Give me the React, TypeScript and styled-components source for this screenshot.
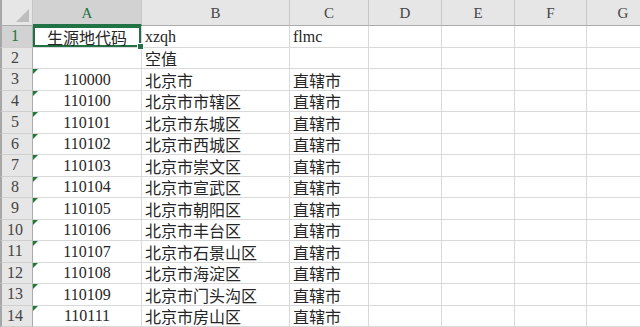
import React, { FC } from "react";
import styled, { createGlobalStyle } from "styled-components";

const GlobalStyle = createGlobalStyle`
  html, body {
    margin: 0;
    padding: 0;
    background: #ffffff;
    overflow: hidden;
  }
`;

const COLS = ["A", "B", "C", "D", "E", "F", "G"];

type Row = { code: string; name: string; kind: string; flag?: boolean };

const ROWS: Row[] = [
  { code: "生源地代码", name: "xzqh", kind: "flmc" },
  { code: "", name: "空值", kind: "" },
  { code: "110000", name: "北京市", kind: "直辖市", flag: true },
  { code: "110100", name: "北京市市辖区", kind: "直辖市", flag: true },
  { code: "110101", name: "北京市东城区", kind: "直辖市", flag: true },
  { code: "110102", name: "北京市西城区", kind: "直辖市", flag: true },
  { code: "110103", name: "北京市崇文区", kind: "直辖市", flag: true },
  { code: "110104", name: "北京市宣武区", kind: "直辖市", flag: true },
  { code: "110105", name: "北京市朝阳区", kind: "直辖市", flag: true },
  { code: "110106", name: "北京市丰台区", kind: "直辖市", flag: true },
  { code: "110107", name: "北京市石景山区", kind: "直辖市", flag: true },
  { code: "110108", name: "北京市海淀区", kind: "直辖市", flag: true },
  { code: "110109", name: "北京市门头沟区", kind: "直辖市", flag: true },
  { code: "110111", name: "北京市房山区", kind: "直辖市", flag: true },
];

const App: FC = () => {
  return (
    <>
      <GlobalStyle />
      <SViewport>
        <SSheet>
          <SCorner>
            <STriangle />
          </SCorner>
          {COLS.map((c, i) => (
            <SColHead key={c} $active={i === 0}>
              {c}
            </SColHead>
          ))}
          {ROWS.map((r, i) => (
            <React.Fragment key={i}>
              <SRowHead $active={i === 0}>{i + 1}</SRowHead>
              <SCell $align="center" $selected={i === 0}>
                {r.flag && <SFlag />}
                {r.code}
                {i === 0 && <SHandle />}
              </SCell>
              <SCell $align="left">{r.name}</SCell>
              <SCell $align="left">{r.kind}</SCell>
              <SCell />
              <SCell />
              <SCell />
              <SCell />
            </React.Fragment>
          ))}
        </SSheet>
      </SViewport>
    </>
  );
};

const SViewport = styled.div`
  width: 100vw;
  height: 100vh;
  overflow: hidden;
`;

const SSheet = styled.div`
  display: grid;
  grid-template-columns: 33px 109px 148px 79px 73px 73px 72px 73px;
  grid-template-rows: 26px repeat(14, 21.5px);
  font-family: "Liberation Serif", "Noto Sans CJK SC", serif;
  color: #262626;
`;

const SCorner = styled.div`
  position: relative;
  background: #e6e6e6;
  border-left: 2px solid #a6a6a6;
  border-bottom: 1px solid #ababab;
  border-right: 1px solid #c6c6c6;
  box-sizing: border-box;
`;

const STriangle = styled.div`
  position: absolute;
  right: 3px;
  bottom: 3px;
  width: 0;
  height: 0;
  border-left: 13px solid transparent;
  border-bottom: 13px solid #bdbdbd;
`;

const SColHead = styled.div<{ $active: boolean }>`
  display: flex;
  align-items: center;
  justify-content: center;
  padding-top: 2px;
  box-sizing: border-box;
  background: ${(p) => (p.$active ? "#d2d2d2" : "#e6e6e6")};
  color: ${(p) => (p.$active ? "#217346" : "#444")};
  border-right: 1px solid #c6c6c6;
  border-bottom: ${(p) => (p.$active ? "2px solid #217346" : "1px solid #ababab")};
  font-size: 15px;
`;

const SRowHead = styled.div<{ $active: boolean }>`
  display: flex;
  align-items: center;
  justify-content: center;
  box-sizing: border-box;
  background: ${(p) => (p.$active ? "#d2d2d2" : "#e6e6e6")};
  color: ${(p) => (p.$active ? "#217346" : "#444")};
  border-left: 2px solid #a6a6a6;
  border-right: 1px solid #ababab;
  border-bottom: 1px solid #cfcfcf;
  font-size: 16px;
  padding-right: 4px;
`;

const SCell = styled.div<{ $align?: "left" | "center"; $selected?: boolean }>`
  position: relative;
  display: flex;
  align-items: center;
  justify-content: ${(p) => (p.$align === "center" ? "center" : "flex-start")};
  padding: 1px 3px 0;
  box-sizing: border-box;
  border-right: 1px solid #d9d9d9;
  border-bottom: 1px solid #d9d9d9;
  font-size: 16px;
  white-space: nowrap;
  box-shadow: ${(p) => (p.$selected ? "inset 0 0 0 2px #217346" : "none")};
`;

const SFlag = styled.span`
  position: absolute;
  left: 0;
  top: 0;
  width: 0;
  height: 0;
  border-top: 5px solid #1e7b34;
  border-right: 5px solid transparent;
`;

const SHandle = styled.span`
  position: absolute;
  right: -3px;
  bottom: -3px;
  width: 5px;
  height: 5px;
  background: #217346;
  border: 1px solid #ffffff;
  z-index: 2;
`;

export default App;
